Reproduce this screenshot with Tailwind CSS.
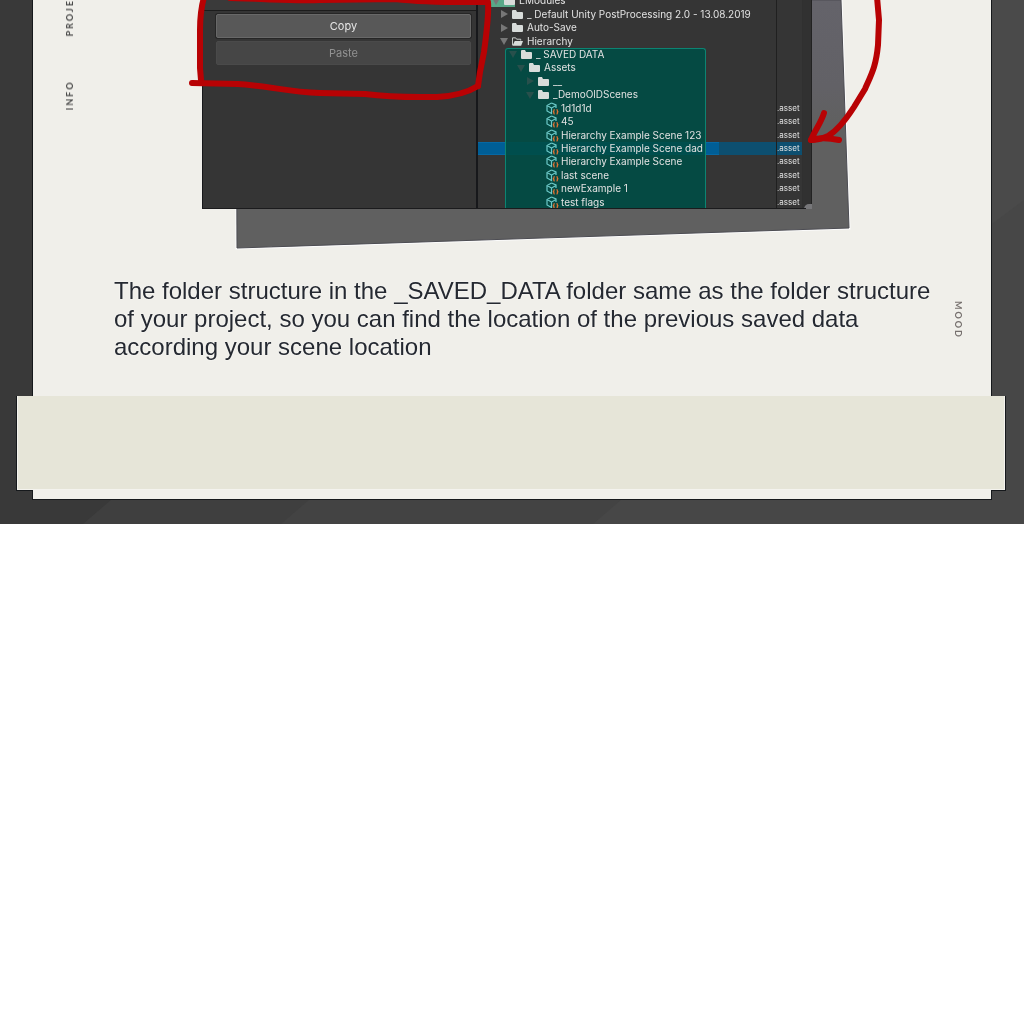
<!DOCTYPE html>
<html lang="en">
<head>
<meta charset="utf-8">
<meta name="viewport" content="width=device-width, initial-scale=1">
<title>Saved data folder</title>
<script src="https://cdn.jsdelivr.net/npm/@tailwindcss/browser@4"></script>
</head>
<body class="bg-white font-['Liberation_Sans',sans-serif]">
<section class="relative overflow-hidden bg-[#393939] pr-[33px] pb-[25px] pl-[33px]">
  <!-- faceted backdrop -->
  <svg class="absolute inset-0 size-full" viewBox="0 0 1024 524" preserveAspectRatio="none" aria-hidden="true">
    <path d="M83 524 512 155V0H1024V524Z" fill="#3f3f3f"/>
    <path d="M281 524 512 325V0H1024V524Z" fill="#434343"/>
    <path d="M593 524 700 432V0H1024V524Z" fill="#474747"/>
    <path d="M980 0H1024V200L980 233Z" fill="#4a4a4a"/>
  </svg>

  <div class="relative bg-[#f0efea] pb-[9px] [filter:drop-shadow(1px_0_0_#16191c)_drop-shadow(-1px_0_0_#16191c)_drop-shadow(0_1px_0_#16191c)]">
    <div class="grid grid-cols-[81px_1fr_58px] pb-[33px]">
      <div class="flex h-[110px] items-end justify-end self-start pr-[38px]">
        <p class="rotate-180 font-[Lato,sans-serif] text-[9px] leading-[12px] font-bold tracking-[2px] whitespace-nowrap text-[#4a4a4a] [writing-mode:vertical-rl]">INFO<span class="mt-[44px] inline-block">PROJECT</span></p>
      </div>

      <main>
        <figure class="relative ml-12 w-[700px]">
          <svg class="absolute top-0 left-0 overflow-visible" width="700" height="260" viewBox="162 0 700 260" aria-hidden="true">
            <defs><linearGradient id="card" x1="0" y1="0" x2="0" y2="1"><stop offset="0" stop-color="#64636a"/><stop offset=".35" stop-color="#626166"/><stop offset=".5" stop-color="#606060"/></linearGradient></defs>
            <path d="M236 0H841L849 228 237 248Z" fill="url(#card)" stroke="#fbfbfb" stroke-width="3"/>
            <path d="M236 0H841L849 228 237 248Z" fill="url(#card)" stroke="#4c4c52" stroke-width="1"/>
          </svg>

          <div class="relative ml-10 flex h-[209px] w-[610px] overflow-hidden bg-[#353535] font-[Inter,sans-serif] text-[10px] leading-[13px] text-[#e2e2e2]">
            <div class="w-[276px] shrink-0 border-r-2 border-b border-l border-[#17181b]">
              <div class="h-[11px] border-b border-[#1c1c1c] bg-[#3a3a3a]"></div>
              <div class="flex flex-col gap-[3px] pt-[3px] pr-[5px] pl-[13px]">
                <button type="button" class="h-6 rounded-[2px] border border-[#686868] bg-[#585858] text-[11px] text-[#e6e6e6] shadow-[0_0_0_1px_#262626]">Copy</button>
                <button type="button" disabled class="h-6 rounded-[2px] border border-[#4a4a4a] bg-[#464646] text-[11px] text-[#929292]">Paste</button>
              </div>
            </div>
            <div id="tree" class="-mt-[6px] grid h-[215px] flex-1 grid-cols-[27px_201px_70px_27px_9px] grid-rows-[repeat(16,minmax(0,1fr))]">
              <div class="col-span-4 col-start-1 row-start-12 bg-[#0d4f70]"></div>
              <div class="col-span-2 col-start-1 row-start-12 mr-[-13px] border-y border-[#0668a4] bg-[#005e96]"></div>
              <div class="col-start-4 row-span-16 row-start-1 border-r border-l border-r-[#303030] border-l-[#202020]"></div>
              <div class="col-start-5 row-span-16 row-start-1 border-r border-[#222] bg-[#313131]"></div>
              <div class="col-start-1 row-start-1 mr-[-10px] ml-3 bg-[#58a888]"></div>
              <div class="col-start-2 row-span-12 row-start-5 rounded-t-[3px] border border-b-0 border-[#0c8472] bg-[#004c45]/90"></div>
            </div>
          </div>

          <svg class="absolute top-0 left-0 overflow-visible" width="700" height="260" viewBox="162 0 700 260" aria-hidden="true">
            <path d="M804 209a5 5 0 0 1 5-5h3v5Z" fill="#77777a"/>
            <path d="M202 208.5H806" stroke="#1b1b1d"/>
            <g fill="none" stroke="#b80204" stroke-width="6" stroke-linecap="round" stroke-linejoin="round">
              <path d="M204-3C201 8 200 15 200 30V68L201 80"/>
              <path d="M192 83L238 84C270 86 287 92 320 93L365 94C395 98 415 97 437 97C457 96 470 91 478 86"/>
              <path d="M230-2C270-1 290 1 320 0L395-1C430 3 460 2 488 2C489 14 487 30 484 52L480 72 478 86"/>
              <path d="M877-3L879 20 878 45C876 66 872 73 865 89L854 107C845 121 838 130 828 136C821 139 816 140 811 140"/>
              <path d="M824 113C821 123 815 130 811 140C820 137 830 138 839 140"/>
            </g>
          </svg>
        </figure>

        <p class="mt-[68px] mb-[2px] text-2xl leading-[28px] text-[#252931] [text-shadow:0_0_2px_#fff]">The folder structure in the _SAVED_DATA folder same as the folder structure of your project, so you can find the location of the previous saved data according your scene location</p>
      </main>

      <p class="mt-[301px] justify-self-start pl-[19px] font-[Lato,sans-serif] text-[9px] leading-[12px] font-bold tracking-[2px] text-[#77716f] [writing-mode:vertical-rl]">MOOD</p>
    </div>
    <div class="-mr-[14px] -ml-4 h-[94px] border-x border-b border-[#f4f3ee] bg-[#e6e5d8]"></div>
  </div>
</section>

<script>
  const arrow = (open, dim) =>
    `<svg class="shrink-0" width="8" height="8" viewBox="0 0 8 8" fill="${dim ? '#28504c' : '#777'}"><path d="${open ? 'M0 1H8L4 8Z' : 'M1 0V8L8 4Z'}"/></svg>`;
  const folder = '<svg class="shrink-0" width="11" height="9" viewBox="0 0 11 9" fill="#d8dcda"><path d="M0 1Q0 0 1 0H4L5 2H10Q11 2 11 3V8Q11 9 10 9H1Q0 9 0 8Z"/></svg>';
  const folderOpen = '<svg class="shrink-0" width="11" height="9" viewBox="0 0 12 9"><path d="M.5 8.500V.5H4L5 2H9.500V3.500" fill="none" stroke="#d8dcda"/><path d="M3 4H12L10 9H.5Z" fill="#d8dcda"/></svg>';
  const asset = '<svg class="shrink-0" width="13" height="13" viewBox="0 0 13 13" fill="none"><path d="M5.500 1L10 3V6M5.500 1L1 3.500V9L5.500 11.500V6L10 3.500M1 3.500L5.500 6" stroke="#6cc9c8" stroke-width="1.200"/><path d="M8.700 7.500Q7.700 7.500 7.900 9L7.300 9.800 7.900 10.500Q7.700 12 8.700 12M10.500 7.500Q11.500 7.500 11.300 9L11.900 9.800 11.300 10.500Q11.500 12 10.500 12" stroke="#e87432" stroke-width="1.200"/></svg>';
  const indent = ['pl-[14px]', 'pl-[22px]', 'pl-[31px]', 'pl-[39px]', 'pl-[48px]', 'pl-[68px]'];
  const rows = [
    [0, 'EModules', true], [1, '_ Default Unity PostProcessing 2.0 - 13.08.2019', false],
    [1, 'Auto-Save', false], [1, 'Hierarchy', true], [2, '_ SAVED DATA', true], [3, 'Assets', true],
    [4, '__', false], [4, '_DemoOlDScenes', true], [5, '1d1d1d'], [5, '45'],
    [5, 'Hierarchy Example Scene 123'], [5, 'Hierarchy Example Scene dad'], [5, 'Hierarchy Example Scene'],
    [5, 'last scene'], [5, 'newExample 1'], [5, 'test flags'],
  ];
  document.getElementById('tree').insertAdjacentHTML('beforeend', rows.map(([level, name, open], i) => {
    const file = level === 5;
    const icon = file ? asset : arrow(open, level > 1) + (name === 'Hierarchy' ? folderOpen : folder);
    return `<div class="col-span-3 col-start-1 flex items-center whitespace-nowrap ${file ? 'gap-[2px]' : 'gap-1'} ${indent[level]}" style="grid-row:${i + 1}">${icon}<span>${name}</span></div>` +
      (file ? `<div class="col-start-4 flex items-center pl-px text-[8px]" style="grid-row:${i + 1}">.asset</div>` : '');
  }).join(''));
</script>
</body>
</html>
